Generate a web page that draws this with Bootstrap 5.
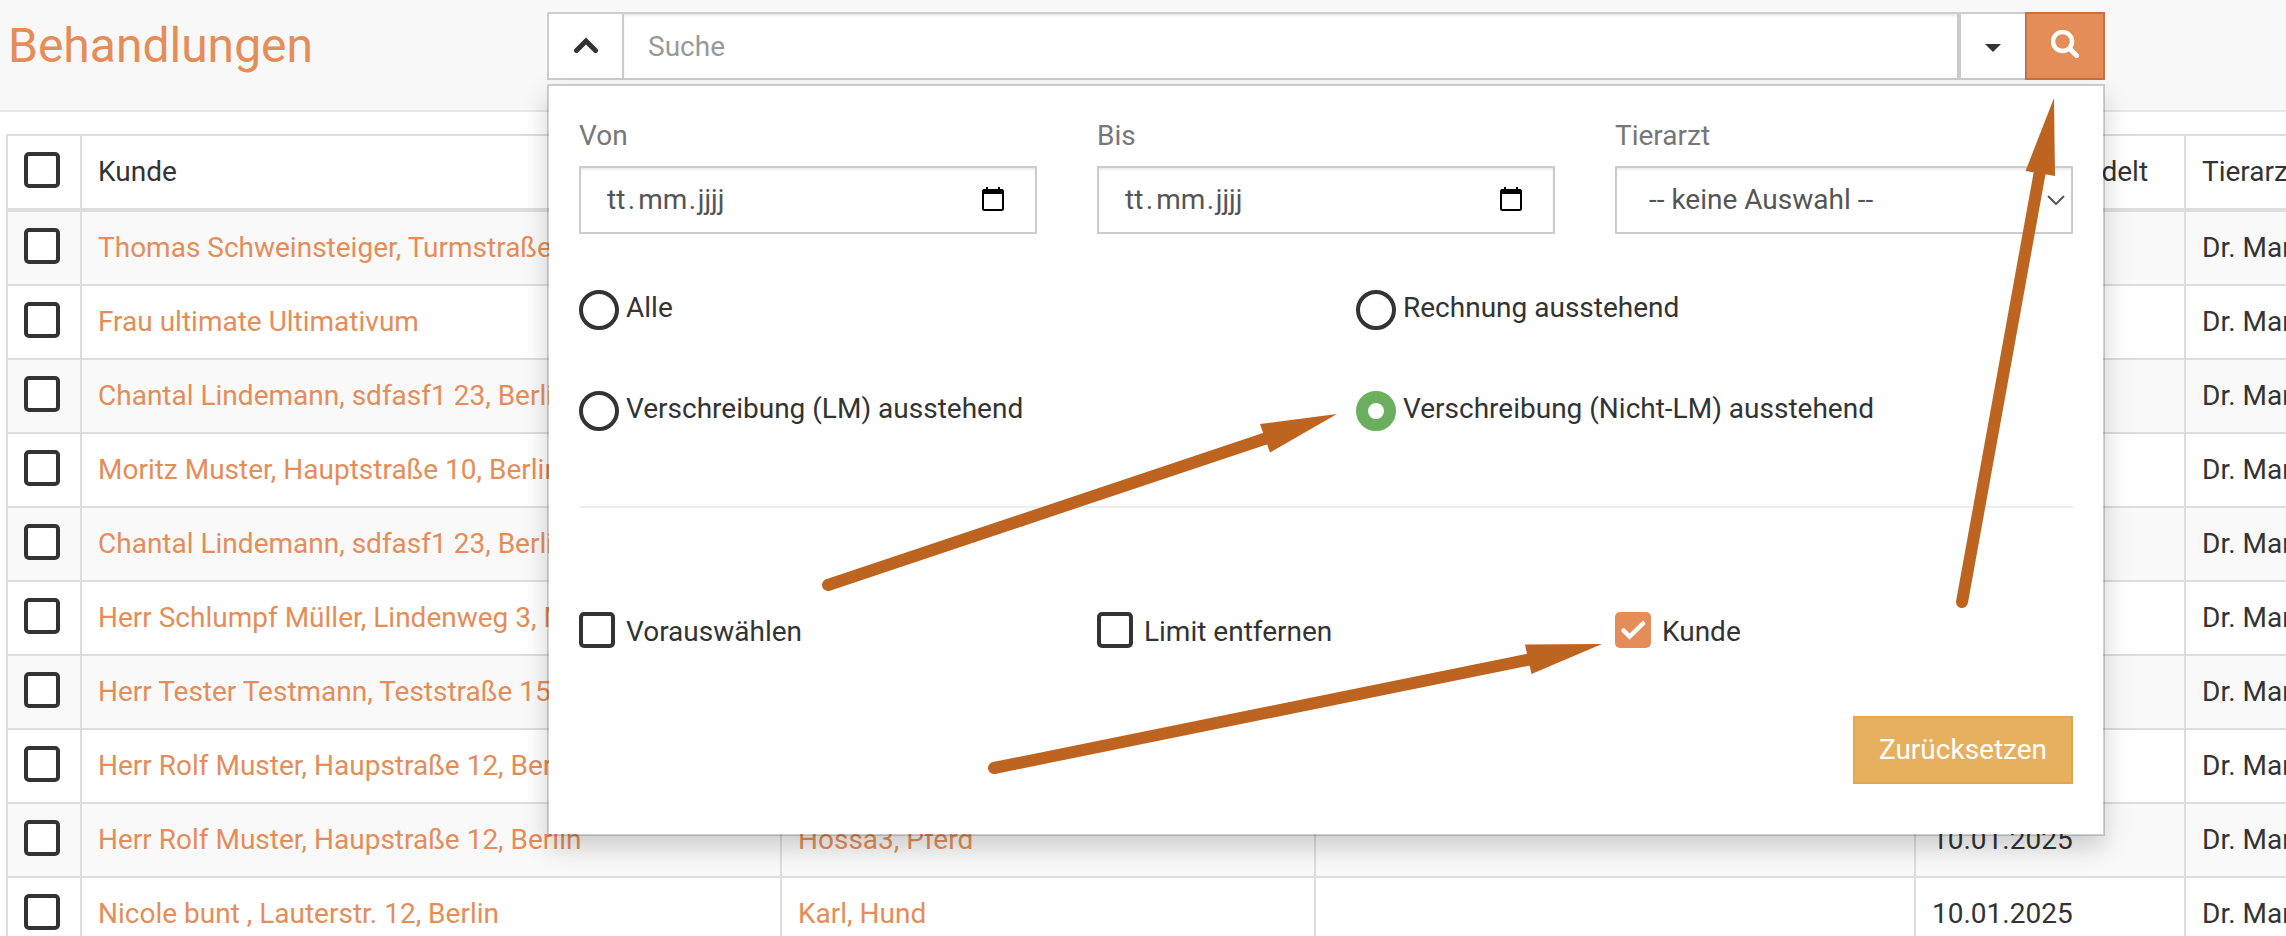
<!DOCTYPE html>
<html lang="de">
<head>
<meta charset="utf-8">
<title>Behandlungen</title>
<link href="https://cdn.jsdelivr.net/npm/bootstrap@5.3.0/dist/css/bootstrap.min.css" rel="stylesheet">
<style>
:root{--brand:#e58d59;--ink:#333}
body{font:28px/40px Roboto,sans-serif;color:var(--ink);background:#fff;height:936px;overflow:hidden;position:relative}
.page-top{height:112px;background:#f8f8f8;border-bottom:2px solid #e7e7e7;padding-top:12px}
.page-title{width:547px;padding:1px 0 0 8px;font-size:48px;line-height:66px;font-weight:400;color:var(--brand);margin:0}
.search-bar{width:1558px;height:68px}
.search-bar>*{border:2px solid #ccc;border-radius:0;background:#fff;height:68px;padding:0}
.search-bar .toggle{width:77px}
.search-bar .query{border-left:0;padding:0 24px;font-size:28px;box-shadow:inset 0 2px 2px rgba(0,0,0,.075);color:#555}
.search-bar .query::placeholder{color:#999;opacity:1}
.search-bar .more{width:66px;border-right:0}
.search-bar .go{width:80px;background:var(--brand);border-color:#c97040}
.list-wrap{overflow:hidden;padding:22px 0 0 6px}
.list-table{width:100%;table-layout:fixed;border-collapse:separate;border-spacing:0;border-left:2px solid #ddd;border-top:2px solid #ddd}
.list-table td,.list-table th{height:74px;padding:0 0 0 16px;border-right:2px solid #ddd;border-bottom:2px solid #ddd;font-weight:400;white-space:nowrap;vertical-align:middle}
.list-table tr>:last-child{border-right:0}
.list-table th{height:76px;border-bottom-width:4px}
.list-table tbody tr:nth-child(odd) td{background:#f9f9f9}
.list-table a,.list-table a:hover{color:var(--brand);text-decoration:none}
.tick{display:block;flex:none;width:36px;height:36px;border:4px solid var(--ink);border-radius:5px;background:#fff}
.list-table .tick{margin-top:-4px}
.tick.on{background:var(--brand);border:0}
.panel{position:absolute;left:547px;top:84px;width:1558px;height:752px;background:#fff;background-clip:padding-box;border:2px solid rgba(0,0,0,.17);box-shadow:0 12px 24px rgba(0,0,0,.175)}
.panel .row{--bs-gutter-x:60px;margin:0}
.field-name{color:#777;padding-top:30px;margin-bottom:10px}
.field{height:68px;border:2px solid #ccc;background:#fff;color:#555;box-shadow:inset 0 2px 2px rgba(0,0,0,.075)}
.date{padding:0 31px 1px 26px}
.date .day{margin-right:2.5px}
.date .month{margin:0 1.5px 0 3px}
.date .year{margin-left:1.5px}
.date svg{margin-top:-1px}
.choose{padding:0 6px 0 32px}
.choice{padding:0 30px}
.ring{flex:none;width:40px;height:40px;border:4px solid var(--ink);border-radius:50%;margin-right:7px}
.ring.on{border:12px solid #6aae5e}
.choice-text{height:44px;margin-top:-2px}
.radio-rows{padding-top:56px}
.radio-rows .row{height:44px}
.radio-rows .second{margin-top:57px}
.rule{height:2px;background:#eee;margin:71px 30px 104px}
.tick-row label{gap:11px}
.reset{width:220px;height:68px;background:#e7b05f;border:2px solid #e4a54c;color:#fff;font-size:28px;line-height:40px;padding:0;margin:64px 30px 0 0}
.arrows{position:absolute;left:0;top:0;pointer-events:none}
</style>
</head>
<body>
<header class="page-top d-flex align-items-start">
  <h1 class="page-title">Behandlungen</h1>
  <div class="search-bar d-flex">
    <button class="toggle d-flex align-items-center justify-content-center" type="button"><svg width="26" height="18" viewBox="0 0 26 18"><path d="M3.500 13.500L13 4l9.500 9.500" fill="none" stroke="#333" stroke-width="5" stroke-linecap="round"/></svg></button>
    <input class="query flex-grow-1" placeholder="Suche">
    <button class="more d-flex align-items-center justify-content-center" type="button"><svg class="mt-1" width="16" height="8"><path d="M0 0h16L8 8z" fill="#333"/></svg></button>
    <button class="go d-flex align-items-center justify-content-center" type="button"><svg class="mb-1" width="28" height="28" viewBox="0 0 28 28"><circle cx="11.500" cy="11.500" r="9.500" fill="none" stroke="#fff" stroke-width="4.500"/><path d="M19 19l6.500 6.500" stroke="#fff" stroke-width="5" stroke-linecap="round"/></svg></button>
  </div>
</header>

<div class="list-wrap">
<table class="list-table">
  <colgroup><col style="width:74px"><col style="width:700px"><col style="width:534px"><col style="width:600px"><col style="width:270px"><col></colgroup>
  <thead><tr><th><span class="tick"></span></th><th>Kunde</th><th>Tier</th><th></th><th>Zuletzt behandelt</th><th>Tierarzt</th></tr></thead>
  <tbody>
  <tr><td><span class="tick"></span></td><td><a href="#">Thomas Schweinsteiger, Turmstraße</a></td><td></td><td></td><td></td><td>Dr. Mar</td></tr>
  <tr><td><span class="tick"></span></td><td><a href="#">Frau ultimate Ultimativum</a></td><td></td><td></td><td></td><td>Dr. Mar</td></tr>
  <tr><td><span class="tick"></span></td><td><a href="#">Chantal Lindemann, sdfasf1 23, Berlin</a></td><td></td><td></td><td></td><td>Dr. Mar</td></tr>
  <tr><td><span class="tick"></span></td><td><a href="#">Moritz Muster, Hauptstraße 10, Berlin</a></td><td></td><td></td><td></td><td>Dr. Mar</td></tr>
  <tr><td><span class="tick"></span></td><td><a href="#">Chantal Lindemann, sdfasf1 23, Berlin</a></td><td></td><td></td><td></td><td>Dr. Mar</td></tr>
  <tr><td><span class="tick"></span></td><td><a href="#">Herr Schlumpf Müller, Lindenweg 3, M</a></td><td></td><td></td><td></td><td>Dr. Mar</td></tr>
  <tr><td><span class="tick"></span></td><td><a href="#">Herr Tester Testmann, Teststraße 15</a></td><td></td><td></td><td></td><td>Dr. Mar</td></tr>
  <tr><td><span class="tick"></span></td><td><a href="#">Herr Rolf Muster, Haupstraße 12, Berlin</a></td><td></td><td></td><td></td><td>Dr. Mar</td></tr>
  <tr><td><span class="tick"></span></td><td><a href="#">Herr Rolf Muster, Haupstraße 12, Berlin</a></td><td><a href="#">Hossa3, Pferd</a></td><td></td><td>10.01.2025</td><td>Dr. Mar</td></tr>
  <tr><td><span class="tick"></span></td><td><a href="#">Nicole bunt , Lauterstr. 12, Berlin</a></td><td><a href="#">Karl, Hund</a></td><td></td><td>10.01.2025</td><td>Dr. Mar</td></tr>
  </tbody>
</table>
</div>

<section class="panel">
  <div class="row">
    <div class="col-4"><div class="field-name">Von</div>
      <div class="field date d-flex align-items-center"><span class="day">tt</span><span>.</span><span class="month">mm</span><span>.</span><span class="year">jjjj</span>
        <svg class="ms-auto" width="22" height="24"><path d="M5 0v4M17 0v4" stroke="#000" stroke-width="2"/><rect x="1" y="3" width="20" height="20" rx="1.500" fill="none" stroke="#000" stroke-width="2"/><path d="M1 2h20v5H1z"/></svg></div></div>
    <div class="col-4"><div class="field-name">Bis</div>
      <div class="field date d-flex align-items-center"><span class="day">tt</span><span>.</span><span class="month">mm</span><span>.</span><span class="year">jjjj</span>
        <svg class="ms-auto" width="22" height="24"><path d="M5 0v4M17 0v4" stroke="#000" stroke-width="2"/><rect x="1" y="3" width="20" height="20" rx="1.500" fill="none" stroke="#000" stroke-width="2"/><path d="M1 2h20v5H1z"/></svg></div></div>
    <div class="col-4"><div class="field-name">Tierarzt</div>
      <div class="field choose d-flex align-items-center justify-content-between"><div>-- keine Auswahl --</div><svg width="18" height="10"><path d="M1 1l8 8 8-8" fill="none" stroke="#555" stroke-width="2"/></svg></div></div>
  </div>
  <div class="radio-rows">
    <div class="row">
      <label class="col-6 choice d-flex"><span class="ring"></span><span class="choice-text">Alle</span></label>
      <label class="col-6 choice d-flex"><span class="ring"></span><span class="choice-text">Rechnung ausstehend</span></label>
    </div>
    <div class="row second">
      <label class="col-6 choice d-flex"><span class="ring"></span><span class="choice-text">Verschreibung (LM) ausstehend</span></label>
      <label class="col-6 choice d-flex"><span class="ring on"></span><span class="choice-text">Verschreibung (Nicht-LM) ausstehend</span></label>
    </div>
  </div>
  <div class="rule"></div>
  <div class="row tick-row">
    <label class="col-4 d-flex"><span class="tick"></span><span>Vorauswählen</span></label>
    <label class="col-4 d-flex"><span class="tick"></span><span>Limit entfernen</span></label>
    <label class="col-4 d-flex"><span class="tick on"><svg class="d-block" width="36" height="36"><path d="M8.500 18.500l6 6 13.500-13" fill="none" stroke="#fff" stroke-width="4.500" stroke-linecap="round"/></svg></span><span>Kunde</span></label>
  </div>
  <div class="d-flex justify-content-end"><button class="reset" type="button">Zurücksetzen</button></div>
</section>

<!-- pointers over the form -->
<svg class="arrows" width="2286" height="936" fill="#be6421" stroke="#be6421">
  <g stroke-width="12" stroke-linecap="round"><path d="M828 585L1270 437"/><path d="M994 768L1532 659"/><path d="M1962 602L2040 171"/></g>
  <g stroke="none"><path d="M1337 414L1260 424L1270 452.500z"/><path d="M1602 644L1525 644.500L1531.500 674z"/><path d="M2054 98L2025.500 171L2055 176z"/></g>
</svg>
<script src="https://cdn.jsdelivr.net/npm/bootstrap@5.3.0/dist/js/bootstrap.bundle.min.js"></script>
</body>
</html>
